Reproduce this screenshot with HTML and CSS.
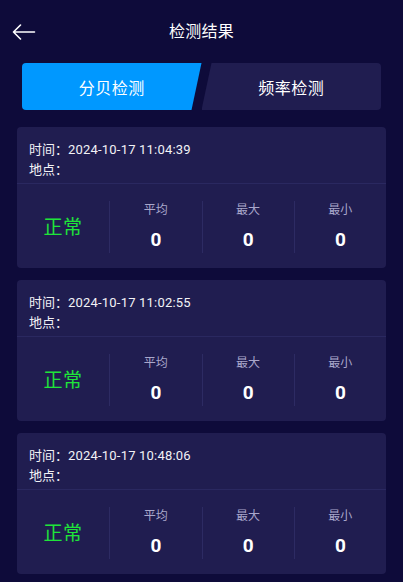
FILE: index.html
```html
<!DOCTYPE html>
<html lang="zh">
<head>
<meta charset="utf-8">
<title>检测结果</title>
<link rel="stylesheet" href="styles.css">
</head>
<body>
<div class="page">
  <header class="header">
    <svg class="back" width="24" height="16" viewBox="0 0 24 16" fill="none" stroke="#ffffff" stroke-width="1.6" stroke-linecap="round" stroke-linejoin="round">
      <path d="M22.5 8 H1.5 M8.5 1 L1.5 8 L8.5 15"/>
    </svg>
    <h1 class="title">检测结果</h1>
  </header>

  <div class="tabs">
    <div class="tab tab-active">分贝检测</div>
    <div class="tab tab-idle">频率检测</div>
  </div>

  <div class="list">
    <div class="card">
      <div class="info">
        <div class="line">时间：<span class="date">2024-10-17 11:04:39</span></div>
        <div class="line">地点：</div>
      </div>
      <div class="stats">
        <div class="status">正常</div>
        <div class="stat"><div class="label">平均</div><div class="value">0</div></div>
        <div class="stat"><div class="label">最大</div><div class="value">0</div></div>
        <div class="stat"><div class="label">最小</div><div class="value">0</div></div>
      </div>
    </div>

    <div class="card">
      <div class="info">
        <div class="line">时间：<span class="date">2024-10-17 11:02:55</span></div>
        <div class="line">地点：</div>
      </div>
      <div class="stats">
        <div class="status">正常</div>
        <div class="stat"><div class="label">平均</div><div class="value">0</div></div>
        <div class="stat"><div class="label">最大</div><div class="value">0</div></div>
        <div class="stat"><div class="label">最小</div><div class="value">0</div></div>
      </div>
    </div>

    <div class="card">
      <div class="info">
        <div class="line">时间：<span class="date">2024-10-17 10:48:06</span></div>
        <div class="line">地点：</div>
      </div>
      <div class="stats">
        <div class="status">正常</div>
        <div class="stat"><div class="label">平均</div><div class="value">0</div></div>
        <div class="stat"><div class="label">最大</div><div class="value">0</div></div>
        <div class="stat"><div class="label">最小</div><div class="value">0</div></div>
      </div>
    </div>
  </div>
</div>
</body>
</html>
```

FILE: styles.css
```css
html, body {
  margin: 0;
  padding: 0;
  background: #0e0b3a;
  height: 100%;
  overflow: hidden;
}

.page {
  font-family: Roboto, "Noto Sans CJK SC", sans-serif;
  color: #ffffff;
  background: #0e0b3a;
  min-height: 582px;
}

.header {
  position: relative;
  height: 63px;
  display: flex;
  align-items: center;
  justify-content: center;
}

.back {
  position: absolute;
  left: 12px;
  top: 24px;
}

.title {
  margin: 0;
  padding-top: 1px;
  font-size: 16px;
  font-weight: 400;
  line-height: 20px;
  letter-spacing: 0.3px;
}

.tabs {
  display: flex;
  margin: 0 22px;
  height: 47px;
}

.tab {
  flex: 1;
  display: flex;
  align-items: center;
  justify-content: center;
  font-size: 16px;
  letter-spacing: 0.5px;
}

.tab-active {
  background: #0098ff;
  border-radius: 4px 0 0 4px;
  clip-path: polygon(0 0, 100% 0, calc(100% - 10px) 100%, 0 100%);
}

.tab-idle {
  background: #201d50;
  border-radius: 0 4px 4px 0;
  clip-path: polygon(10px 0, 100% 0, 100% 100%, 0 100%);
}

.list {
  display: flex;
  flex-direction: column;
  gap: 12px;
  padding: 17px 17px 0;
}

.card {
  background: #201d50;
  border-radius: 4px;
  height: 141px;
  display: flex;
  flex-direction: column;
}

.info {
  padding: 13px 12px 3px;
  border-bottom: 1px solid #2a2860;
}

.line {
  font-size: 13px;
  line-height: 20px;
  color: #f2f2f6;
}

.date {
  letter-spacing: 0.2px;
}

.stats {
  flex: 1;
  display: grid;
  grid-template-columns: repeat(4, 1fr);
  padding: 17px 0 15px;
}

.status {
  display: flex;
  align-items: center;
  justify-content: center;
  padding-bottom: 3px;
  font-size: 19px;
  color: #1fe43a;
  letter-spacing: 0.5px;
}

.stat {
  border-left: 1px solid #2d2b63;
  display: flex;
  flex-direction: column;
  align-items: center;
}

.label {
  font-size: 12px;
  line-height: 18px;
  color: #a9a7cb;
}

.value {
  margin-top: 10px;
  font-size: 19px;
  line-height: 22px;
  font-weight: 700;
  color: #ffffff;
}
```
